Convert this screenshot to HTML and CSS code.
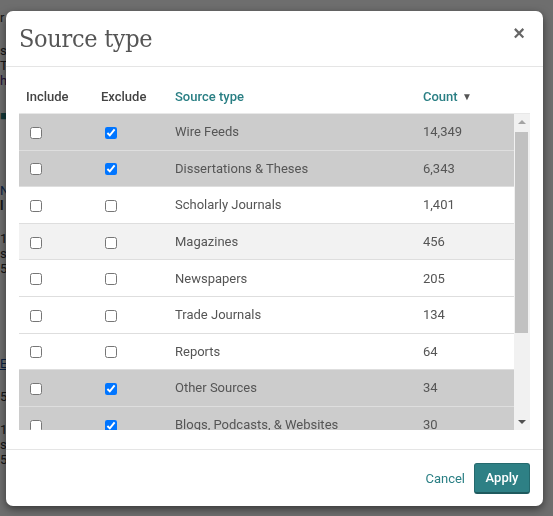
FILE: index.html
```html
<!DOCTYPE html>
<html>
<head>
    <title>Source type</title>
    <link rel="stylesheet" href="styles.css">
</head>
<body>
    <div class="page">
        <p>r</p>
        <p class="gap">s</p>
        <p>T</p>
        <p class="link">h</p>
        <p class="icon">&#9632;</p>
        <p class="gap2 blue">N</p>
        <p class="bold">l</p>
        <p class="gap">1</p>
        <p>s</p>
        <p>5</p>
        <p class="gap3 blue under">E</p>
        <p class="gap">5</p>
        <p class="gap">1</p>
        <p>s</p>
        <p>5</p>
    </div>
    <div class="overlay"></div>

    <div class="modal">
        <div class="modal-header">
            <h2 class="modal-title">Source type</h2>
            <span class="close">&times;</span>
        </div>

        <div class="modal-body">
            <div class="row head">
                <div>Include</div>
                <div>Exclude</div>
                <div class="sort">Source type</div>
                <div class="sort">Count <span class="arrow">&#9660;</span></div>
            </div>
            <div class="list">
                <div class="rows">
                    <div class="row picked">
                        <div><input type="checkbox"></div>
                        <div><input type="checkbox" checked></div>
                        <div>Wire Feeds</div>
                        <div>14,349</div>
                    </div>
                    <div class="row picked">
                        <div><input type="checkbox"></div>
                        <div><input type="checkbox" checked></div>
                        <div>Dissertations &amp; Theses</div>
                        <div>6,343</div>
                    </div>
                    <div class="row">
                        <div><input type="checkbox"></div>
                        <div><input type="checkbox"></div>
                        <div>Scholarly Journals</div>
                        <div>1,401</div>
                    </div>
                    <div class="row hover">
                        <div><input type="checkbox"></div>
                        <div><input type="checkbox"></div>
                        <div>Magazines</div>
                        <div>456</div>
                    </div>
                    <div class="row">
                        <div><input type="checkbox"></div>
                        <div><input type="checkbox"></div>
                        <div>Newspapers</div>
                        <div>205</div>
                    </div>
                    <div class="row">
                        <div><input type="checkbox"></div>
                        <div><input type="checkbox"></div>
                        <div>Trade Journals</div>
                        <div>134</div>
                    </div>
                    <div class="row">
                        <div><input type="checkbox"></div>
                        <div><input type="checkbox"></div>
                        <div>Reports</div>
                        <div>64</div>
                    </div>
                    <div class="row picked">
                        <div><input type="checkbox"></div>
                        <div><input type="checkbox" checked></div>
                        <div>Other Sources</div>
                        <div>34</div>
                    </div>
                    <div class="row picked">
                        <div><input type="checkbox"></div>
                        <div><input type="checkbox" checked></div>
                        <div>Blogs, Podcasts, &amp; Websites</div>
                        <div>30</div>
                    </div>
                </div>
                <div class="scrollbar">
                    <span class="scroll-up"></span>
                    <span class="thumb"></span>
                    <span class="scroll-down"></span>
                </div>
            </div>
        </div>

        <div class="modal-footer">
            <a class="cancel">Cancel</a>
            <button class="apply">Apply</button>
        </div>
    </div>
</body>
</html>
```

FILE: styles.css
```css
body {
    margin: 0;
    font-family: Roboto, "Liberation Sans", Arial, sans-serif;
    font-size: 13px;
    color: #555;
    background: #fff;
    height: 516px;
    overflow: hidden;
}
.page {
    padding: 10px 0 0 0;
    font-size: 13px;
    color: #333;
}
.page p {
    margin: 0;
    line-height: 15px;
}
.page .gap { margin-top: 18px; }
.page .gap2 { margin-top: 60px; }
.page .gap3 { margin-top: 80px; }
.page .link { color: #4a2a7a; }
.page .blue { color: #1a4e9a; }
.page .under { text-decoration: underline; }
.page .bold { font-weight: bold; }
.page .icon {
    margin-top: 20px;
    color: #2a7f84;
}
.overlay {
    position: fixed;
    top: 0;
    left: 0;
    right: 0;
    bottom: 0;
    background: rgba(0, 0, 0, 0.57);
}
.modal {
    position: absolute;
    left: 6px;
    top: 11px;
    width: 537px;
    height: 495px;
    background: #fff;
    border-radius: 7px;
    box-shadow: 0 3px 9px rgba(0, 0, 0, 0.5);
    display: flex;
    flex-direction: column;
}
.modal-header {
    height: 55px;
    border-bottom: 1px solid #e5e5e5;
    display: flex;
    align-items: center;
    justify-content: space-between;
    padding: 0 18px 0 13px;
}
.modal-title {
    margin: 0;
    font-family: "DejaVu Serif", "Liberation Serif", serif;
    font-stretch: condensed;
    font-weight: normal;
    font-size: 25px;
    color: #555;
    letter-spacing: -0.3px;
}
.close {
    font-family: "Liberation Sans", Arial, sans-serif;
    font-weight: bold;
    font-size: 20px;
    color: #666;
    margin-top: -11px;
}
.modal-body {
    padding: 14px 13px 0 13px;
    height: 368px;
    border-bottom: 1px solid #e5e5e5;
}
.row {
    display: grid;
    grid-template-columns: 75px 74px 1fr 98px;
    align-items: center;
    height: 36.6px;
    box-sizing: border-box;
    border-bottom: 1px solid #dedede;
}
.row > div {
    padding-left: 7px;
}
.row input {
    margin: 0 0 0 4px;
    width: 12px;
    height: 12px;
    vertical-align: middle;
}
.head {
    height: 33px;
    border-bottom: 1px solid #e8e8e8;
    font-weight: 500;
    color: #444;
    padding: 0 16px 2px 0;
}
.sort {
    color: #2a7f84;
}
.arrow {
    font-size: 10px;
    color: #555;
    margin-left: 1px;
    vertical-align: 1px;
}
.list {
    display: flex;
    height: 316px;
    overflow: hidden;
}
.rows {
    flex: 1;
}
.picked {
    background: #cccccc;
}
.hover {
    background: #f2f2f2;
}
.scrollbar {
    width: 16px;
    background: #f1f1f1;
    display: flex;
    flex-direction: column;
    align-items: center;
}
.scroll-up,
.scroll-down {
    width: 0;
    height: 0;
    border-left: 4px solid transparent;
    border-right: 4px solid transparent;
}
.scroll-up {
    border-bottom: 4px solid #a3a3a3;
    margin: 6px 0 8px 0;
}
.thumb {
    width: 13px;
    height: 201px;
    background: #c1c1c1;
    margin-left: -2px;
}
.scroll-down {
    border-top: 4px solid #505050;
    margin-top: auto;
    margin-bottom: 6px;
}
.modal-footer {
    flex: 1;
    display: flex;
    align-items: center;
    justify-content: flex-end;
    padding: 0 13px;
    gap: 9px;
}
.cancel {
    color: #2a7f84;
    font-size: 13px;
    cursor: pointer;
}
.apply {
    background: #2e8085;
    color: #fff;
    border: 1px solid #256a6e;
    border-bottom: 2px solid #1f5a5e;
    border-radius: 3px;
    font-family: Roboto, "Liberation Sans", Arial, sans-serif;
    font-weight: 500;
    font-size: 13px;
    width: 56px;
    height: 31px;
    cursor: pointer;
}
```
